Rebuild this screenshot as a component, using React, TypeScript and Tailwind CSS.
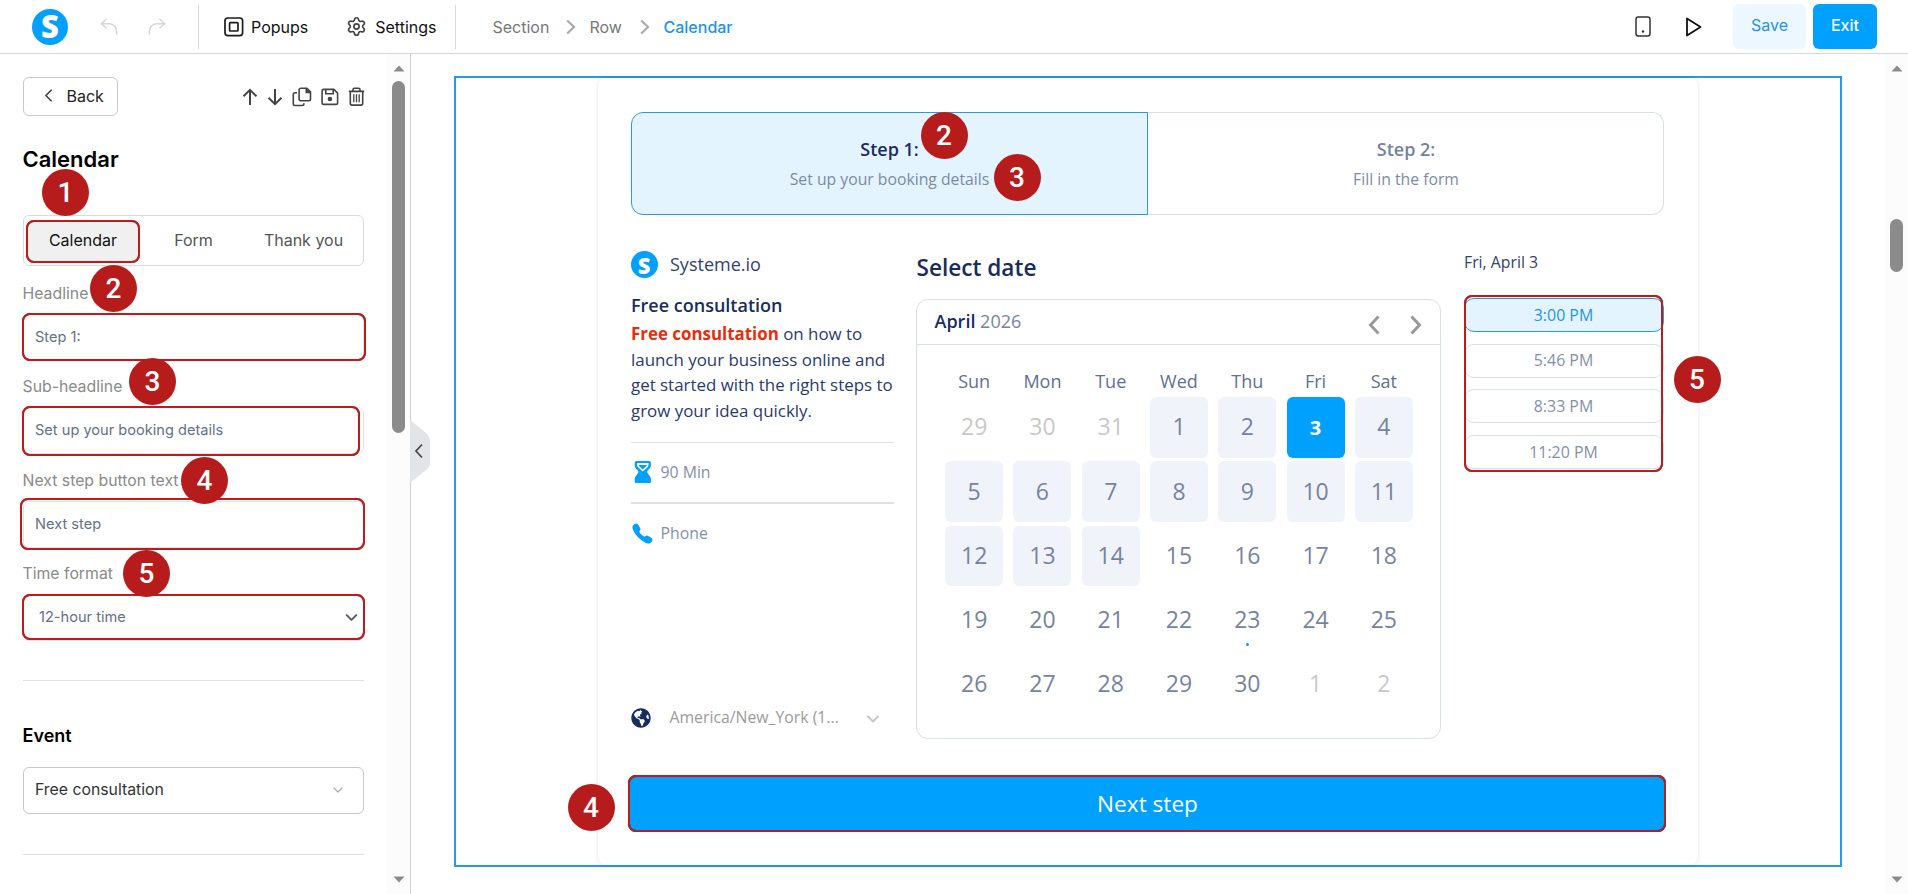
import { useState } from "react";
import type { ReactNode } from "react";
import { ChevronDown, ChevronLeft, Settings } from "lucide-react";
import { FaGlobeAmericas } from "react-icons/fa";
import { IoCall } from "react-icons/io5";
import clsx from "clsx";

const TABS = [
  { id: "calendar", label: "Calendar",  width: "w-[119px]" },
  { id: "form",     label: "Form",      width: "w-[102px]" },
  { id: "thanks",   label: "Thank you", width: "w-[118px]" },
];

const WEEKDAYS = ["Sun", "Mon", "Tue", "Wed", "Thu", "Fri", "Sat"];

type DayState = "outside" | "free" | "open" | "selected" | "today";

interface Day {
  day: number;
  state: DayState;
}

function stateOf(day: number): DayState {
  if (day === 3) return "selected";
  if (day === 23) return "today";
  return day <= 14 ? "open" : "free";
}

const DAYS: Day[] = [
  ...[29, 30, 31].map((day) => ({ day, state: "outside" as DayState })),
  ...Array.from({ length: 30 }, (_, i) => ({ day: i + 1, state: stateOf(i + 1) })),
  ...[1, 2].map((day) => ({ day, state: "outside" as DayState })),
];

const SLOTS = ["3:00 PM", "5:46 PM", "8:33 PM", "11:20 PM"];

function Badge({ n, className }: { n: number; className: string }) {
  return (
    <span
      className={clsx(
        "absolute z-20 flex h-[47px] w-[47px] items-center justify-center rounded-full bg-[#b71c1c] font-[Roboto,sans-serif] text-[28px] font-medium leading-none text-white",
        className,
      )}
    >
      {n}
    </span>
  );
}

function Frame({ className }: { className: string }) {
  return (
    <span
      className={clsx(
        "pointer-events-none absolute z-10 rounded-[8px] border-2 border-[#c01a1c] drop-shadow-[0.5px_0.5px_0.5px_rgba(0,0,0,0.6)]",
        className,
      )}
    />
  );
}

function Logo({ className }: { className: string }) {
  return (
    <span
      className={clsx(
        "flex shrink-0 items-center justify-center rounded-full bg-[#00a0ff] font-['Open_Sans',sans-serif] font-extrabold leading-none text-white",
        className,
      )}
    >
      S
    </span>
  );
}

function UndoIcon({ className }: { className?: string }) {
  return (
    <svg viewBox="0 0 18 18" className={clsx("h-[18px] w-[18px]", className)} fill="none" stroke="#d6d6d6" strokeWidth="1.5">
      <path d="M6.5 1 1.3 5.7l5.2 4.6M1.3 5.7h7.9a7.3 7.3 0 0 1 7.3 7.3v3.6" />
    </svg>
  );
}

function PopupsIcon() {
  return (
    <svg viewBox="0 0 20 20" className="h-5 w-5" fill="none" stroke="#1c1c1c" strokeWidth="1.7">
      <rect x="1" y="1" width="17.6" height="17.6" rx="2.8" />
      <rect x="5.6" y="5.6" width="8.4" height="8.4" rx="0.8" />
    </svg>
  );
}

function ArrowIcon({ className }: { className?: string }) {
  return (
    <svg viewBox="0 0 16 18" className={clsx("h-[18px] w-4", className)} fill="none" stroke="#444" strokeWidth="2">
      <path d="M8 17V2M1.5 8.3 8 1.8l6.5 6.5" />
    </svg>
  );
}

function CopyIcon() {
  return (
    <svg viewBox="0 0 20 20" className="h-5 w-5" fill="none" stroke="#444" strokeWidth="1.6">
      <path d="M8.8 1.2h6.1l3.6 3.6v7.3a1.7 1.7 0 0 1-1.7 1.7h-8a1.7 1.7 0 0 1-1.7-1.7V2.9a1.7 1.7 0 0 1 1.7-1.7Z" />
      <path d="M14.3 1.2v4.2h4.2" fill="#444" />
      <path d="M5 5.8H3a1.7 1.7 0 0 0-1.7 1.7v9.3A1.7 1.7 0 0 0 3 18.5h7.2a1.7 1.7 0 0 0 1.7-1.7v-.6" />
    </svg>
  );
}

function SaveIcon() {
  return (
    <svg viewBox="0 0 18 18" className="h-[18px] w-[18px]" fill="none" stroke="#444" strokeWidth="1.6">
      <path d="M2.6 1.4h10.2l3.8 3.8v9.7a1.5 1.5 0 0 1-1.5 1.5H2.6a1.5 1.5 0 0 1-1.5-1.5v-12a1.5 1.5 0 0 1 1.5-1.5Z" />
      <path d="M4.8 1.4v4.4h7.4V1.4" />
      <circle cx="8.9" cy="11" r="2.3" fill="#444" stroke="none" />
    </svg>
  );
}

function TrashIcon() {
  return (
    <svg viewBox="0 0 17 19" className="h-[19px] w-[17px]" fill="none" stroke="#444" strokeWidth="1.6">
      <path d="M.8 4.4h15.4M5 4.2V2.6a1.4 1.4 0 0 1 1.4-1.4h4.2A1.4 1.4 0 0 1 12 2.6v1.6M2.3 4.6v11.7a1.8 1.8 0 0 0 1.8 1.8h8.8a1.8 1.8 0 0 0 1.8-1.8V4.6" />
      <path d="M5.8 7.3v8M8.5 7.3v8M11.2 7.3v8" strokeWidth="1.3" />
    </svg>
  );
}

function HourglassIcon() {
  return (
    <svg viewBox="0 0 18 22" className="h-[22px] w-[18px] shrink-0" fill="#00a0ff" fillRule="evenodd">
      <path d="M2.400 0h12.800c1 0 1.700.8 1.700 1.700v2.700c0 2.800-3.300 4.400-3.700 6.100-.1.600 0 .9.300 1.400.9 1.600 3.400 3.400 3.400 6.200v2.600c0 .8-.5 1.300-1.300 1.300H2c-.8 0-1.300-.5-1.300-1.300v-2.600c0-2.800 2.500-4.600 3.400-6.200.3-.5.4-.8.3-1.400C4 8.800.7 7.200.7 4.400V1.700C.7.8 1.400 0 2.400 0Zm.7 2v1.900c0 2.300 3.700 4.200 5.700 6.600 2-2.400 5.700-4.300 5.700-6.600V2H3.100Z" />
      <path d="M4.600 3.900h8.400c-.8 2-3 2.900-4.200 4.600C7.600 6.800 5.400 5.900 4.600 3.900Z" />
    </svg>
  );
}

function Scrollbar({ thumb }: { thumb: string }) {
  return (
    <div className="flex w-[23px] shrink-0 flex-col items-center bg-[#fcfcfc] pt-[11px] pb-[11px]">
      <svg viewBox="0 0 12 7" className="h-[7px] w-3" fill="#8b8b8b"><path d="M6 .5 11.5 6.5H.5Z" /></svg>
      <div className={clsx("w-[13px] rounded-full bg-[#8b8b8b]", thumb)} />
      <svg viewBox="0 0 12 7" className="mt-auto h-[7px] w-3" fill="#8b8b8b"><path d="M6 6.5.5.5h11Z" /></svg>
    </div>
  );
}

function Crumb() {
  return (
    <svg viewBox="0 0 10 16" className="mr-[14px] ml-[17px] h-4 w-[10px]" fill="none" stroke="#aaa" strokeWidth="2.2">
      <path d="m1.2 1.5 6.8 6.5-6.8 6.5" />
    </svg>
  );
}

function TopBar() {
  return (
    <header className="flex h-[54px] shrink-0 items-center border-b border-[#d6d8da] text-[16px] text-[#111]">
      <Logo className="ml-8 h-9 w-9 text-[31px]" />
      <UndoIcon className="ml-8" />
      <UndoIcon className="ml-[30px] -scale-x-100" />
      <div className="ml-8 h-11 w-px bg-[#d6d8da]" />
      <button className="ml-[25px] flex items-center gap-[7px]">
        <PopupsIcon />
        Popups
      </button>
      <button className="ml-[38px] flex items-center gap-2">
        <Settings className="h-[21px] w-[21px] text-[#444]" strokeWidth={1.9} />
        Settings
      </button>
      <div className="ml-[18px] h-11 w-px bg-[#d6d8da]" />

      <nav className="ml-[37px] flex items-center text-[#777]">
        <span className="w-[56px]">Section</span>
        <Crumb />
        <span className="w-[33px]">Row</span>
        <Crumb />
        <span className="text-[16px] font-medium text-[#1f93ea]">Calendar</span>
      </nav>

      <svg viewBox="0 0 16 21" className="ml-auto h-[21px] w-4" fill="none" stroke="#333" strokeWidth="1.5">
        <rect x="1" y="1" width="14" height="19" rx="2.2" />
        <circle cx="8" cy="15.5" r="1.2" fill="#333" stroke="none" />
      </svg>
      <svg viewBox="0 0 18 20" className="ml-[34px] h-5 w-[18px]" fill="none" stroke="#111" strokeWidth="1.8" strokeLinejoin="round">
        <path d="M2 1.4v17.2L15.5 10Z" />
      </svg>
      <button className="ml-[30px] h-[45px] w-[73px] rounded-md bg-[#edf7ff] pb-[3px] text-[#1f93ea]">Save</button>
      <button className="mr-[31px] ml-[7px] h-[45px] w-16 rounded-md bg-[#00a0ff] pb-[3px] font-medium text-white">Exit</button>
    </header>
  );
}

interface FieldProps {
  label: string;
  children: ReactNode;
}

function Field({ label, children }: FieldProps) {
  return (
    <div className="h-[93.3px]">
      <p className="h-6 pt-px text-[15.8px] leading-6 text-[#8a8a8a]">{label}</p>
      <div className="relative mt-[9px] flex h-[47px] items-center rounded-md border border-[#e4e4e4] px-[11.5px] pt-px text-[14.6px] text-[#667085]">
        {children}
      </div>
    </div>
  );
}

function Sidebar() {
  const [tab, setTab] = useState("calendar");

  return (
    <aside className="relative flex w-[411px] shrink-0 border-r border-[#d0d0d0]">
      <div className="relative w-[387px] pt-[23px] pr-[23px] pl-[22.5px]">
        <div className="flex items-center justify-between">
          <button className="flex h-[39px] w-[95px] items-center rounded-md border border-[#c8c8c8] pb-[2px] pl-[14px] text-[16px] text-[#222]">
            <ChevronLeft className="mr-2 h-[21px] w-[21px] text-[#444]" strokeWidth={2} />
            Back
          </button>
          <div className="-mr-px flex items-center">
            <ArrowIcon />
            <ArrowIcon className="ml-[9px] rotate-180" />
            <span className="ml-[9px]"><CopyIcon /></span>
            <span className="ml-[9px]"><SaveIcon /></span>
            <span className="ml-[9px]"><TrashIcon /></span>
          </div>
        </div>

        <h2 className="mt-[29px] text-[22px] leading-7 font-semibold text-black">Calendar</h2>

        <div className="relative mt-[42px] flex h-[51px] items-center rounded-md border border-[#dadada] text-[16px] text-[#555]">
          {TABS.map((t) => (
            <button
              key={t.id}
              onClick={() => setTab(t.id)}
              className={clsx("flex h-full items-center justify-center", t.width)}
            >
              <span
                className={clsx(
                  "flex h-[41px] items-center justify-center rounded-[8px] pb-px",
                  tab === t.id && "w-[112px] bg-[#f0f0f0] text-[#111]",
                )}
              >
                {t.label}
              </span>
            </button>
          ))}
          <Frame className="top-[4px] left-[2px] h-[43px] w-[114px]" />
        </div>

        <div className="mt-[15px]">
          <Field label="Headline">
            Step 1:
            <Frame className="-top-[2px] -left-[1.5px] h-[48px] w-[344px]" />
          </Field>
          <Field label="Sub-headline">
            Set up your booking details
            <Frame className="-top-[2px] -left-[1.5px] h-[50px] w-[338px]" />
          </Field>
          <Field label="Next step button text">
            Next step
            <Frame className="-top-[4px] -left-[4px] h-[52px] w-[345px]" />
          </Field>
          <Field label="Time format">
            <span className="ml-1">12-hour time</span>
            <ChevronDown className="-mr-[9px] ml-auto h-[19px] w-[19px] text-[#555b6b]" strokeWidth={2.5} />
            <Frame className="-top-[1px] -left-[1.5px] h-[46px] w-[343px]" />
          </Field>
        </div>

        <div className="mt-[26px] h-px bg-[#e0e0e0]" />
        <h3 className="mt-[41px] text-[18px] leading-7 font-semibold text-black">Event</h3>
        <button className="mt-[17px] flex h-[47px] w-full items-center justify-between rounded-md border border-[#c8c8c8] pr-[17px] pb-[2px] pl-[11.5px] text-[15.8px] text-[#333]">
          Free consultation
          <ChevronDown className="h-4 w-4 text-[#aaa]" strokeWidth={1.7} />
        </button>
        <div className="mt-[40px] h-px bg-[#e0e0e0]" />

        <Badge n={1} className="top-[115px] left-[42px]" />
        <Badge n={2} className="top-[211px] left-[90px]" />
        <Badge n={3} className="top-[304px] left-[129px]" />
        <Badge n={4} className="top-[403px] left-[181px]" />
        <Badge n={5} className="top-[496px] left-[123px]" />
      </div>

      <Scrollbar thumb="mt-[9px] h-[352px]" />

      {/* Collapse handle */}
      <svg viewBox="0 0 21 64" className="absolute top-[366px] left-[410px] z-20 h-16 w-[21px]">
        <path d="M0 0 16 13q4 3.5 4 8v22q0 4-4 7L0 63Z" fill="#e3e4e5" />
        <path d="m12 24.500-6 6.500 6 6.500" fill="none" stroke="#444" strokeWidth="1.700" />
      </svg>
    </aside>
  );
}

function Steps() {
  return (
    <div className="flex h-[103px] shrink-0 text-center">
      <div className="relative w-[517px] rounded-l-[12px] border border-[#2d9ad6] bg-[#e3f4ff] pt-[23px] pl-px">
        <p className="text-[18px] leading-[27px] font-semibold text-[#182c60]">Step 1:</p>
        <p className="mt-[4px] text-[15.75px] leading-6 text-[#7c8aa5]">Set up your booking details</p>
        <Badge n={2} className="-top-[1px] left-[289px]" />
        <Badge n={3} className="top-[41px] left-[362px]" />
      </div>
      <div className="flex-1 rounded-r-[12px] border border-l-0 border-[#dadfe6] pt-[23px] pl-[2px]">
        <p className="text-[18px] leading-[27px] font-semibold text-[#7582a0]">Step 2:</p>
        <p className="mt-[4px] text-[15.75px] leading-6 text-[#7c8aa5]">Fill in the form</p>
      </div>
    </div>
  );
}

function EventInfo() {
  return (
    <section className="flex w-[263px] shrink-0 flex-col pt-[36px]">
      <div className="flex h-[27px] items-center gap-[12.5px] text-[18px] text-[#33416f]">
        <Logo className="h-[27px] w-[27px] text-[22px]" />
        Systeme.io
      </div>
      <h3 className="mt-[14px] ml-[0.5px] text-[18px] leading-[27px] font-semibold text-[#182c60]">Free consultation</h3>
      <p className="mt-[2px] ml-[0.5px] text-[16.9px] leading-[25.7px] whitespace-nowrap text-[#2a3a6c]">
        <b className="text-[#e62e0c]">Free consultation</b> on how to
        <br />
        launch your business online and
        <br />
        get started with the right steps to
        <br />
        grow your idea quickly.
      </p>
      <div className="mt-[18px] h-px bg-[#e2e2e2]" />
      <div className="flex h-[59px] items-center pl-[3px] text-[15.8px] text-[#8490aa]">
        <HourglassIcon />
        <span className="mt-px ml-[9px]">90 Min</span>
      </div>
      <div className="h-[2px] bg-[#e2e2e2]" />
      <div className="flex h-[59px] items-center text-[15.8px] text-[#8490aa]">
        <IoCall className="h-[23px] w-[23px] text-[#00a0ff]" />
        <span className="mt-px ml-[7px]">Phone</span>
      </div>
      <div className="mt-auto mb-[11px] flex h-[20px] items-center text-[15.8px] text-[#9b9b9b]">
        <FaGlobeAmericas className="h-5 w-5 text-[#182c60]" />
        <span className="ml-[19px]">America/New_York (1...</span>
        <ChevronDown className="mt-[2px] mr-[11px] ml-auto h-5 w-5 text-[#c8c8c8]" strokeWidth={2.5} />
      </div>
    </section>
  );
}

function DayCell({ day, state }: Day) {
  return (
    <div className="flex h-[64.3px] justify-center">
      <button
        className={clsx(
          "relative flex h-[60.5px] w-[58px] items-center justify-center rounded-[6px]",
          state === "outside" && "text-[#c8c8c8]",
          state === "free" && "text-[#76839f]",
          state === "today" && "text-[#76839f]",
          state === "open" && "bg-[#f0f4fa] text-[#76839f]",
          state === "selected" ? "bg-[#00a0ff] pt-[1px] text-[20px] font-bold text-white" : "pb-[1.5px] text-[23px]",
        )}
      >
        {day}
        {state === "today" && <span className="absolute top-[53px] h-[3px] w-[3px] rounded-full bg-[#1f93ea]" />}
      </button>
    </div>
  );
}

function Calendar() {
  return (
    <section className="ml-[22px] w-[525px] shrink-0 pt-[35px]">
      <h3 className="ml-px pt-px text-[22.6px] leading-[34px] font-semibold text-[#182c60]">Select date</h3>
      <div className="mt-[14px] h-[440px] rounded-[12px] border border-[#d9dfe5]">
        <div className="flex h-[45px] items-center justify-between border-b border-[#d9dfe5] pr-[18px] pl-[18px]">
          <p className="pb-[1px] text-[18px] font-semibold text-[#182c60]">
            April <span className="font-medium text-[#76839f]">2026</span>
          </p>
          <div className="flex gap-[30px] pt-[5px]">
            <svg viewBox="0 0 12 20" className="h-5 w-3" fill="none" stroke="#999" strokeWidth="3"><path d="M10.5 1.5 2.5 10l8 8.5" /></svg>
            <svg viewBox="0 0 12 20" className="h-5 w-3" fill="none" stroke="#999" strokeWidth="3"><path d="m1.5 1.5 8 8.5-8 8.5" /></svg>
          </div>
        </div>
        <div className="mt-[22px] mr-[21.5px] ml-[23.5px] grid grid-cols-7 text-center">
          {WEEKDAYS.map((w) => (
            <span key={w} className="h-[30px] text-[18px] leading-[28px] text-[#5f6f93]">{w}</span>
          ))}
          {DAYS.map((d, i) => <DayCell key={i} {...d} />)}
        </div>
      </div>
    </section>
  );
}

function Slots() {
  const [picked, setPicked] = useState(SLOTS[0]);

  return (
    <section className="relative ml-[23px] w-[200px] shrink-0 pt-[35px]">
      <p className="ml-[0.5px] text-[15.8px] leading-6 text-[#33416f]">Fri, April 3</p>
      <div className="mt-[24px] flex flex-col gap-[11.7px]">
        {SLOTS.map((slot) => (
          <button
            key={slot}
            onClick={() => setPicked(slot)}
            className={clsx(
              "h-[34px] rounded-[10px] border pt-[1px] text-[15.9px] leading-none",
              slot === picked ? "border-[#2d9ad6] bg-[#e3f4ff] text-[#1f93ea]" : "border-[#dadfe6] text-[#8490aa]",
            )}
          >
            {slot}
          </button>
        ))}
      </div>
      <Frame className="top-[80px] left-0 h-[177px] w-[199px]" />
      <Badge n={5} className="top-[141px] left-[210px]" />
    </section>
  );
}

function Canvas() {
  return (
    <main className="flex flex-1 bg-white pt-[22px] pb-[27px] pl-[43px] font-['Open_Sans',sans-serif]">
      <div className="flex h-[791px] w-[1388px] justify-center border-2 border-[#2799e6]">
        <div className="mr-px flex w-[1100px] flex-col rounded-lg pt-[34px] pr-[34px] pl-[33px] shadow-[0_0_4px_rgba(0,0,0,0.12)]">
          <Steps />
          <div className="flex h-[524px]">
            <EventInfo />
            <Calendar />
            <Slots />
          </div>
          <div className="relative mt-[36px] -mr-[2px] -ml-[3px]">
            <button className="h-[57px] w-full rounded-[8px] bg-[#00a0ff] pl-[2px] text-[22.6px] text-white">Next step</button>
            <Frame className="inset-0" />
            <Badge n={4} className="top-[9px] -left-[60px]" />
          </div>
        </div>
      </div>
    </main>
  );
}

export default function App() {
  return (
    <div className="flex h-[894px] w-[1908px] flex-col overflow-hidden bg-white font-[Inter,sans-serif]">
      <TopBar />
      <div className="flex min-h-0 flex-1">
        <Sidebar />
        <Canvas />
        <Scrollbar thumb="mt-[147px] h-[53px]" />
      </div>
    </div>
  );
}
